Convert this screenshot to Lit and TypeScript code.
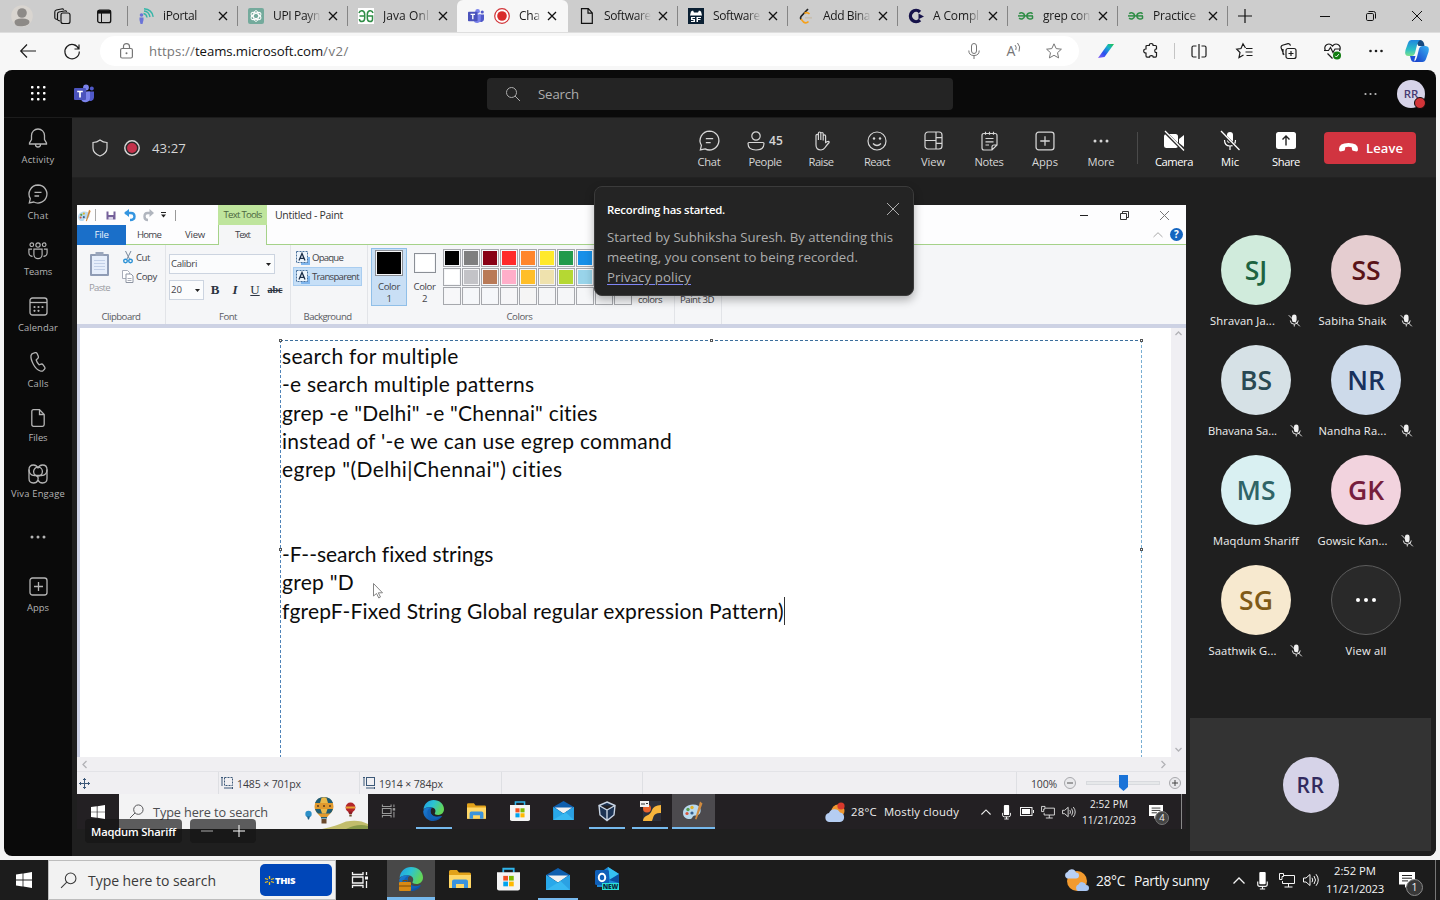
import { LitElement, html, svg, css, nothing } from "lit";
import { customElement, property } from "lit/decorators.js";
import { styleMap } from "lit/directives/style-map.js";

/* Single-line text whose tracking is adjusted to span a known advance width. */
@customElement("fit-text")
class FitText extends LitElement {
  @property({ type: Number }) w = 0;
  @property() s = "";
  static styles = css`
    :host { display: inline-block; white-space: pre; flex: none; }
  `;
  render() { return html`<span>${this.s}</span>`; }
  updated() {
    const el = this.renderRoot.querySelector("span") as HTMLElement;
    el.style.letterSpacing = "0px";
    if (!this.w) return;
    const natural = el.getBoundingClientRect().width;
    el.style.letterSpacing = (this.w - natural) / this.s.length + "px";
  }
}

const t = (s: string, w = 0, c = "") => html`<fit-text class=${c} .w=${w} .s=${s}></fit-text>`;
const ic = (w: number, h: number, body: unknown, vb = `0 0 ${w} ${h}`, c = "") =>
  html`<svg class="i ${c}" width=${w} height=${h} viewBox=${vb}>${body}</svg>`;

const base = css`
  * { box-sizing: border-box; }
  :host { display: block; font-family: "Open Sans", "Noto Sans", sans-serif; }
  .i { display: block; flex: none; fill: none; stroke: currentColor; stroke-width: 1; overflow: visible; }
  .c { display: flex; align-items: center; justify-content: center; flex: none; }
  .row { display: flex; align-items: center; }
  .grow { flex: 1; }
`;

/* ---------- shared icon bodies ---------- */
const xMark = svg`<path d="M1 1L9 9M9 1L1 9"/>`;
const teamsLogo = svg`
  <circle cx="12" cy="3" r="2.9" fill="#7b83eb" stroke="none"/><circle cx="17.8" cy="4" r="2" fill="#5059c9" stroke="none"/>
  <path d="M13.5 7H20v6a3.6 3.6 0 0 1-6 2.5z" fill="#5059c9" stroke="none"/>
  <path d="M7 7h9v6.5a4.6 4.6 0 0 1-9 1z" fill="#7b83eb" stroke="none"/>
  <rect x="0" y="3.6" width="12" height="12" rx="1" fill="#4b53bc" stroke="none"/>
  <path d="M3.2 7h5.6M6 7v6" stroke="#fff" stroke-width="1.7"/>`;
const chatBody = svg`<path d="M10 1a9 9 0 1 1-4.2 17L1.3 19l1-4.4A9 9 0 0 1 10 1zM6.500 8.300h7M6.500 12h4.600"/>`;
const appsPlus = svg`<rect x="1" y="1" width="17" height="17" rx="2.5"/><path d="M9.5 5v9M5 9.5h9"/>`;
const dots3 = svg`<g fill="currentColor" stroke="none"><circle cx="2" cy="2" r="1.5"/><circle cx="8" cy="2" r="1.5"/><circle cx="14" cy="2" r="1.5"/></g>`;
const winLogo = svg`<path fill="#fff" stroke="none" d="M0 2.4L6.6 1.5V7.6H0zM7.4 1.4L16 0V7.6H7.4zM0 8.4H6.6V14.5L0 13.6zM7.4 8.4H16V16L7.4 14.6z"/>`;
const magnify = svg`<circle cx="10" cy="6" r="5"/><path d="M6.4 9.6L1 15"/>`;
const taskView = svg`<g stroke-width="1.3"><path d="M.5 0V2.500H11V0M.5 16v-2.500H11V16M.5 5h10.500v6H.5z"/><path d="M14.500 0V3M14.500 9v7" /></g><rect x="13" y="4.500" width="3" height="3" fill="currentColor" stroke="none"/>`;
const edge = svg`<defs><linearGradient id="eg" x1="0" y1="0" x2="1" y2=".4"><stop offset="0" stop-color="#1e9de8"/><stop offset=".5" stop-color="#2cc3d2"/><stop offset="1" stop-color="#62d558"/></linearGradient><linearGradient id="eb" x1="0" y1="0" x2="1" y2="1"><stop offset="0" stop-color="#1b7fd6"/><stop offset="1" stop-color="#0c4a9c"/></linearGradient></defs>
  <g stroke="none"><path fill="url(#eg)" d="M.6 11C1 4.500 6 0 12 0c7 0 12 4.800 12 10.500 0 4-3 6.500-6.500 6.500-3 0-4.500-1.200-4-2 1.500-2 1-6-3.500-6.500C6 8 2 9 .6 11z"/>
  <path fill="url(#eb)" d="M10 8.500C5 7.500 1 9 .2 13 .5 19.500 6 24 12 24c4.500 0 8-2.200 9.800-5.300.3-.5-.2-.7-.6-.4C16 20.500 9 18.500 8.500 13.500c-.1-2.200.5-4 2.500-5z"/>
  <path fill="#1162b8" d="M8.600 13c.3 5 5.900 7.700 12.700 5.300C16 23.500 8 22.500 5.500 17 4 13 6 9.500 10 8.700 9 10 8.500 11 8.600 13z"/></g>`;
const folder = svg`<g stroke="none"><path fill="#e2a21a" d="M0 1.500A1.500 1.500 0 0 1 1.500 0H8l2 2.500h10.500A1.500 1.500 0 0 1 22 4v14H0z"/><path fill="#ffd767" d="M0 5h22v12a1 1 0 0 1-1 1H1a1 1 0 0 1-1-1z"/><path fill="#3b93dd" d="M3 18v-6.500A2 2 0 0 1 5 9.500h12a2 2 0 0 1 2 2V18h-4v-4H7v4z"/></g>`;
const store = svg`<path d="M6 5V1.200h10V5" stroke="#2fb4ea" stroke-width="1.700"/><path fill="#f4f4f4" stroke="none" d="M0 4.500h22V20a2 2 0 0 1-2 2H2a2 2 0 0 1-2-2z"/><g stroke="none"><rect x="6" y="8" width="4.500" height="4.500" fill="#f25022"/><rect x="11.500" y="8" width="4.500" height="4.500" fill="#7fba00"/><rect x="6" y="13.500" width="4.500" height="4.500" fill="#00a4ef"/><rect x="11.500" y="13.500" width="4.500" height="4.500" fill="#ffb900"/></g>`;
const mail = svg`<g stroke="none"><path fill="#0f5fae" d="M0 7L12 0l12 7v5H0z"/><path fill="#f2f2f2" d="M2 7.500h20L13 14h-2z"/><path fill="#28a8ea" d="M0 7l12 7.500L24 7v15H0z"/><path fill="#46c5f5" d="M24 22H0L24 7z" opacity=".55"/><path fill="#1e8ad6" d="M14.500 13L24 22V7z" opacity=".5"/></g>`;
const chevUp = svg`<path d="M.5 6.500L6 1l5.500 5.500" stroke-width="1.300"/>`;
const taskMic = svg`<rect x="2" y="0" width="6" height="11.500" rx="1" fill="#fff" stroke="none"/><path d="M.5 9v2.500q0 2 2 2h5q2 0 2-2V9M5 13.500V16M2.500 16h5" stroke-width="1.100"/>`;
const network = svg`<path d="M5 2.500h10.500v8H3.500V8M9.500 10.500V14M5.500 14h8"/><path d="M.5.500h4v3h-1.500v3H.5z"/>`;
const speaker = svg`<path d="M.5 5h2.500L7 1.500v11L3 9H.5zM9 4.800q1.500 2.200 0 4.400M11 3q3 4 0 8M13 1.200q4.500 5.800 0 11.600"/>`;
const noteIcon = svg`<path fill="#fff" stroke="none" d="M0 0h16v12.500H9L6 16v-3.500H0z"/><path d="M3 3.500h10M3 6.200h10M3 8.900h6" stroke="#222"/>`;
const micOff = svg`<g stroke="none" fill="currentColor"><rect x="4.300" y="0" width="5" height="8.500" rx="2.500"/></g><path d="M2.500 6.500q0 4 4.300 4t4.300-4M6.800 10.500V13M.8.800l12 12" />`;

/* ---------- browser ---------- */
const g4g = svg`<g stroke="#2f8d46" stroke-width="1.500" transform="translate(-.5 2.600)"><path d="M1.800 3.200C3 1.600 7 1.800 7 5.200S3.500 9 1.500 7.600M15 3.200C14 1.600 9.400 1.800 9.400 5.200S13.500 9.200 15 7.600V5.300"/><path d="M.5 5.300h15"/></g>`;
const favs = {
  portal: svg`<g stroke="none" fill="#6b74d8"><circle cx="3.500" cy="7" r="1.800"/><path d="M1.500 9.500h4v2.500l-1 4h-2l-1-4z"/></g><g stroke="#35b6a8" stroke-width="1.400"><path d="M5.500 5.500q3 .5 3.500 4M6 3q5 .5 6 6M6 .8q8 .7 9.200 8"/></g>`,
  gpt: svg`<rect width="16" height="16" rx="2" fill="#74aa9c" stroke="none"/><g stroke="#fff" stroke-width=".9"><ellipse cx="8" cy="8" rx="2.600" ry="5.400"/><ellipse cx="8" cy="8" rx="2.600" ry="5.400" transform="rotate(60 8 8)"/><ellipse cx="8" cy="8" rx="2.600" ry="5.400" transform="rotate(120 8 8)"/></g>`,
  gfg: svg`<rect width="16" height="16" fill="#fff" stroke="none"/><g stroke="#2f8d46" stroke-width="1.500"><path d="M1 5C2 1.500 6.700 2 6.700 6.500V10q0 3.500-2.700 3.500T1.500 11M7 8H1.500M15 5C14 1.500 9.300 2 9.300 6.500V10q0 3.500 2.700 3.500T14.500 11V8H9.300"/></g>`,
  page: svg`<path stroke-width="1.200" d="M2.500.7h6.800l4 4.200v10.400h-10.800zM9 .8v4.400h4.300"/>`,
  sf: svg`<rect width="16" height="16" fill="#0b2033" stroke="none"/><path fill="#fff" stroke="none" d="M3 3.500l2-1 1 2h4l1-2 2 1 1 4H2zM3 9h4v1H4.500v1H7v3H3v-1h2.500v-1H3zM8.500 9H13v1h-3v1h2.500v1H10v2H8.500z"/>`,
  leet: svg`<g stroke-width="1.700"><path d="M10 1L3 8.500Q2 10 3 11.500" stroke="#222"/><path d="M11.500 6Q9 3.500 6.500 5.500M3 11l2.500 3Q8 16 10.500 13.500" stroke="#f5a11c"/><path d="M7 9.800h7" stroke="#c9c0b0"/></g>`,
  chegg: svg`<path d="M12 4A5.600 5.600 0 1 0 12 12" stroke="#16124a" stroke-width="3.400"/><path d="M10.500 5.500L16 8.500l-5.500 2.800z" fill="#16124a" stroke="none"/>`,
};

@customElement("browser-chrome")
class BrowserChrome extends LitElement {
  static styles = [base, css`
    .tabs { height: 32px; background: #cdcdcd; display: flex; color: #111; font-size: 12px; }
    .lead { width: 38px; height: 32px; }
    .lead.f { width: 43px; }
    .lead.l { width: 46px; }
    .tab { width: 110px; height: 32px; display: flex; align-items: center; position: relative; flex: none; }
    .tab::before { content: ""; width: 1px; height: 20px; background: #858585; }
    .tab.nosep::before { background: transparent; }
    .tab.active { background: #f7f7f7; border-radius: 6px 6px 0 0; width: 111px; }
    .tab.after { width: 109px; }
    .fav { width: 16px; margin-left: 10px; }
    .label { width: 48px; margin-left: 9px; color: #1a1a1a; line-height: 18px;
      -webkit-mask-image: linear-gradient(90deg, #000 70%, transparent); }
    .tab.active .label { width: 22px; margin-left: 9px; }
    .x { margin-left: 7px; width: 10px; }
    .tab.active .x { margin-left: 6px; }
    .tab.after .label { width: 47px; }
    .x svg { stroke-width: 1.300; }
    .win { width: 46px; height: 32px; }
    .bar { height: 38px; background: #f7f7f7; display: flex; align-items: center; color: #1c1c1c; box-shadow: inset 0 1px #dedede; }
    .nav { width: 44px; }
    .pill { width: 979px; height: 30px; border-radius: 15px; background: #fff; display: flex; align-items: center; color: #767676; font-size: 13.200px; margin-left: 6px; padding: 0 6px 0 20px; }
    .pill .u { color: #111; }
    .pill .lock { margin-right: 16px; }
    .w40 { width: 40px; } .w44 { width: 44.100px; }
    .gap5 { width: 3px; }
    .vs { width: 1px; height: 16px; background: #c4c4c4; }
    .read { font-size: 14px; line-height: 16px; }
  `];
  tab(icon: unknown, label: string, w: number, cls = "", rec = false) {
    return html`<div class="tab ${cls}">
      <div class="fav">${ic(16, 16, icon, cls.includes("active") ? "0 0 20 18" : "0 0 16 16")}</div>
      ${rec ? html`<div class="fav">${ic(16, 16, svg`<circle cx="8" cy="8" r="7.300" stroke="#d13438" stroke-width="1.200" fill="#fff"/><circle cx="8" cy="8" r="4.800" fill="#d92c2c" stroke="none"/>`)}</div>` : nothing}
      <div class="label">${t(label, w)}</div>
      <div class="x">${ic(10, 10, xMark)}</div>
    </div>`;
  }
  render() {
    return html`
      <div class="tabs">
        <div class="c lead f">${ic(22, 22, svg`<g stroke="none"><circle cx="11" cy="11" r="10.800" fill="#d9d5d0"/><circle cx="11" cy="8" r="4.800" fill="#8d8a87"/><path d="M3.500 17q0-3.500 7.500-3.500t7.500 3.500-7.500 4.200T3.500 17z" fill="#8d8a87"/></g>`)}</div>
        <div class="c lead">${ic(17, 17, svg`<g stroke-width="1.150"><rect x="7" y="5" width="9" height="10.500" rx="2"/><path d="M6 13l-1.600-.5q-.9-.3-.9-1.500V6q0-1.700 1.500-2l6.500-1.200 1.500.7M3.500 11.500l-1.800-.5Q.8 10.700.8 9.500V4q0-1.600 1.500-2L8.500.8l1.500.7"/></g>`)}</div>
        <div class="c lead l">${ic(15, 15, svg`<rect x=".7" y="1.200" width="13" height="12.500" rx="2" stroke-width="1.300"/><path d="M.7 3h13" stroke-width="3.200"/><path d="M4.500 4v9.500"/>`)}</div>
        ${this.tab(favs.portal, "iPortal", 34)}
        ${this.tab(favs.gpt, "UPI Payn", 47)}
        ${this.tab(favs.gfg, "Java Onl", 46)}
        ${this.tab(teamsLogo, "Cha", 21, "nosep active", true)}
        ${this.tab(favs.page, "Software", 47, "nosep after")}
        ${this.tab(favs.sf, "Software", 47)}
        ${this.tab(favs.leet, "Add Bina", 47)}
        ${this.tab(favs.chegg, "A Compl", 46)}
        ${this.tab(g4g, "grep con", 47)}
        ${this.tab(g4g, "Practice", 43)}
        <div class="tab" style="width:36px"><div class="c" style="width:34px">${ic(14, 14, svg`<path d="M7 0v14M0 7h14" stroke-width="1.200"/>`)}</div></div>
        <div class="grow"></div>
        <div class="c win">${ic(10, 10, svg`<path d="M0 5.500h10"/>`)}</div>
        <div class="c win">${ic(10, 10, svg`<rect x=".5" y="2.500" width="7" height="7" rx="1.200"/><path d="M2.500.5H7.500Q9.500.5 9.500 2.500V7.500"/>`)}</div>
        <div class="c win">${ic(10, 10, svg`<path d="M0 0l10 10M10 0L0 10"/>`)}</div>
      </div>
      <div class="bar">
        <div class="c nav" style="width:56px">${ic(16, 14, svg`<path d="M7 .5L.7 7L7 13.500M.7 7H16" stroke-width="1.200"/>`)}</div>
        <div class="c nav" style="width:32px">${ic(16, 16, svg`<path d="M14.800 6A7.200 7.200 0 1 0 15.300 8.500M15 1.500V6H10.500" stroke-width="1.200"/>`)}</div>
        <div class="gap5"></div><div class="gap5"></div>
        <div class="pill">
          <div class="lock">${ic(13, 16, svg`<rect x=".6" y="5.500" width="11.800" height="9.500" rx="1.500" stroke-width="1.200"/><path d="M3.500 5.500V3.500q0-2.900 3-2.900t3 2.900V5.500" stroke-width="1.200"/><circle cx="6.500" cy="10.200" r="1" fill="currentColor" stroke="none"/>`)}</div>
          ${t("https://", 46)}${t("teams.microsoft.com", 128, "u")}${t("/v2/", 26)}
          <div class="grow"></div>
          <div class="c w40">${ic(12, 16, svg`<rect x="3.500" y=".5" width="5" height="10" rx="2.500"/><path d="M.8 7.500q0 5 5.200 5t5.200-5M6 12.500V16"/>`)}</div>
          <div class="c w40"><span class="read">A</span>${ic(6, 12, svg`<path d="M0 2q2 2 .8 5M2.500 0q3.500 3.500 1.500 8.500"/>`, "0 2 6 12")}</div>
          <div class="c w40" style="width:39px">${ic(16, 16, svg`<path d="M8 .8l2.200 4.800 5.200.6-3.900 3.500 1.100 5.200L8 12.300l-4.600 2.600 1.100-5.200L.6 6.200l5.200-.6z"/>`)}</div>
        </div>
        <div class="gap5"></div><div class="gap5" style="width:2px"></div>
        <div class="c w44">${ic(16, 14, svg`<defs><linearGradient id="pg" x1="1" y1="0" x2="0" y2="1"><stop offset="0" stop-color="#1fc24a"/><stop offset=".3" stop-color="#18b4c8"/><stop offset=".65" stop-color="#2a50f0"/><stop offset="1" stop-color="#8a5cf6"/></linearGradient></defs><path fill="url(#pg)" stroke="none" d="M10 0h6L6.500 13 0 14z"/>`)}</div>
        <div class="c w44" style="width:46px">${ic(16, 16, svg`<path stroke-width="1.200" d="M3 3.500q0-1 1-1h2.300q0-2 1.900-2t1.900 2h2.400q1 0 1 1v2.300q-1.800 0-1.800 1.900t1.800 1.900v3.200q0 1.400-1 1.400h-2.200q0-1.600-1.900-1.600t-1.900 1.600H4q-1 0-1-1.400V10Q.7 10 .7 8T3 6z"/>`)}</div>
        <div class="vs"></div>
        <div class="c w44" style="width:47px">${ic(16, 15, svg`<path stroke-width="1.200" d="M5.500 2H2.500Q1 2 1 3.500v8Q1 13 2.500 13h3M10.500 2h3q1.500 0 1.500 1.500v8q0 1.500-1.500 1.500h-3M8 0v15"/>`)}</div>
        <div class="c w44">${ic(17, 16, svg`<path stroke-width="1.200" d="M9.500 5L7 .8 5 5.500.7 6.200 4 9.500l-1 5L7.500 12M10 5.500h6.500M9.500 9h7M10.500 12.500h6"/>`)}</div>
        <div class="c w44">${ic(17, 16, svg`<rect x="6" y="5.500" width="10" height="10" rx="2" stroke-width="1.200"/><path stroke-width="1.200" d="M11 8v5M8.500 10.500h5M4 12L1.200 5Q.6 3 2.500 2.200L8 .7q2-.3 2.500 2M3 11.500V6"/>`)}</div>
        <div class="c w44">${ic(17, 17, svg`<path stroke-width="1.200" d="M1.500 8Q-.5 3.500 3 1.500 6 0 8.500 3 11 0 14 1.500 17.500 3.500 15.500 8M3.500 10.500L8.500 15.500M0 7.500h4.500l2-3 2.500 5 2-3.500h5"/><circle cx="13" cy="12.500" r="4" fill="#107c10" stroke="none"/><path d="M11.200 12.800l1.200 1.200 2.400-2.800" stroke="#fff"/>`)}</div>
        <div class="c w44" style="width:43px">${ic(14, 4, svg`<g fill="currentColor" stroke="none"><circle cx="1.500" cy="2" r="1.300"/><circle cx="7" cy="2" r="1.300"/><circle cx="12.500" cy="2" r="1.300"/></g>`)}</div>
        <div class="c w44" style="width:40px">${ic(24, 24, svg`<defs><linearGradient id="ca" x1="0" y1="0" x2="0" y2="1"><stop offset="0" stop-color="#1f86e0"/><stop offset=".6" stop-color="#2bbfc6"/><stop offset="1" stop-color="#7fe08a"/></linearGradient><linearGradient id="cb" x1="0" y1="1" x2="1" y2="0"><stop offset="0" stop-color="#1638c8"/><stop offset="1" stop-color="#37b4f3"/></linearGradient></defs><g stroke="none"><path fill="#164a80" d="M10 1h5q3 0 4 3.500L19.500 7h-6z"/><path fill="url(#ca)" d="M6.500 1H15q-2 1-3 5l-2 8q-.8 3-3.500 3H3.500Q-1 17 .5 11L3 4Q4 1 6.500 1z"/><path fill="url(#cb)" d="M17.500 23H9q2-1 3-5l2-8q.8-3 3.500-3h3q4.500 0 3 6L21 20q-1 3-3.500 3z"/><path fill="#1d50d8" d="M5 17h5.500l-1 3.500Q9 23 11 23H9q-2.500 0-3.200-3z"/></g>`)}</div>
      </div>`;
  }
}

/* ---------- paint window inside the shared screen ---------- */
const palette = [
  ["#000", "#7f7f7f", "#880015", "#ff2a2a", "#ff862b", "#ffe92b", "#219a4b", "#1790e8", "#3f48cc", "#a349a4"],
  ["#fff", "#c3c3c7", "#b97a57", "#ffaec9", "#ffbe29", "#efe2ae", "#b5d833", "#99d4ea", "#7092be", "#c8bfe7"],
  ["#f7f7f9", "#f5f7fa", "#f5f7fa", "#f6f6f8", "#f5f5f5", "#f5f6f8", "#f5f6f8", "#f5f6f8", "#f5f6f8", "#f5f6f8"],
];
const lines: [string, number][] = [
  ["search for multiple", 177], ["-e search multiple patterns", 252], ["grep -e \"Delhi\" -e \"Chennai\" cities", 316],
  ["instead of '-e we can use egrep command", 390], ["egrep \"(Delhi|Chennai\") cities", 281], ["", 0], ["", 0],
  ["-F--search fixed strings", 211], ["grep \"D", 72], ["fgrepF-Fixed String Global regular expression Pattern)", 501],
];
const paintLogo = svg`<g stroke="none"><path fill="#b9d9ee" d="M10 3C4 3 0 7 0 11.500S4 18 7.500 17.500c2-.3 1.500-2 3-3s4 0 6-2S19 3 10 3z"/><circle cx="5" cy="8" r="1.700" fill="#5a9e4b"/><circle cx="9" cy="6" r="1.700" fill="#e1b32c"/><circle cx="4" cy="12" r="1.600" fill="#d8553c"/><circle cx="9" cy="11.500" r="1.600" fill="#385f8c"/><path fill="#d08a3e" d="M17 0l2.500 2-6 16-1.500-.5z"/></g>`;

@customElement("paint-window")
class PaintWindow extends LitElement {
  static styles = [base, css`
    :host { color: #434349; font-size: 9.600px; }
    .title { height: 20px; background: #fdfdfe; display: flex; align-items: center; }
    .qa { width: 141px; padding-left: 1px; display: flex; align-items: center; }
    .tt { width: 49px; height: 20px; background: #bfe59d; color: #4c6640; text-align: center; line-height: 20px; }
    .name { margin-left: 8px; color: #333; font-size: 10.500px; }
    .wb { width: 40.500px; color: #333; }
    .tabs { height: 20px; display: flex; background: #fdfdfe; border-bottom: 1px solid #a5d289; line-height: 19px; text-align: center; }
    .file { width: 49px; height: 20px; background: #1a6fc9; color: #e8f2fc; }
    .tb { width: 46px; } .tb.on { width: 49px; height: 20px; background: #f5f6f7; border: solid #a5d289; border-width: 0 1px; }
    .help { width: 13px; height: 13px; border-radius: 50%; background: #1465c0; color: #fff; font-weight: 700; line-height: 13px; font-size: 10px; margin: 3px 3px 0 7px; }
    .ribbon { height: 79px; background: #f5f6f8; display: flex; }
    .g { border-right: 1px solid #e2e4e8; display: flex; flex-direction: column; height: 79px; padding-top: 3px; }
    .g .body { flex: 1; display: flex; }
    .g .cap { height: 15px; line-height: 16px; text-align: center; color: #5a5b62; }
    .paste { width: 43px; padding: 4px 0 0 12px; color: #9a9ba2; display: flex; flex-direction: column; gap: 4px; }
    .cc { display: flex; flex-direction: column; padding: 0 0 0 2px; }
    .cc > div { height: 19px; display: flex; align-items: center; gap: 2px; }
    .sel { border: 1px solid #ccd4e0; background: #fbfcfd; height: 20px; display: flex; align-items: center; justify-content: space-between; padding: 0 3px 2px 1px; }
    .fnt { padding: 6px 0 0 3px; display: flex; flex-direction: column; gap: 6px; }
    .fr { display: flex; }
    .b { width: 20px; text-align: center; font: bold 13px/19px "Liberation Serif", serif; color: #2b3340; }
    .opq { height: 19px; display: flex; align-items: center; gap: 2px; padding-left: 3px; width: 69px; margin-left: 2px; }
    .opq.on { background: #c6dff7; border: 1px solid #a9cdf0; padding-left: 2px; }
    .col { width: 36px; height: 58px; display: flex; flex-direction: column; align-items: center; line-height: 12px; border: 1px solid transparent; flex: none; }
    .col.on { background: #c9dff5; border-color: #90bfe8; }
    .sw { border: 1px solid #8b8f96; padding: 1px; background: #f5f6f8; }
    .sw div { width: 100%; height: 100%; }
    .one { width: 28px; height: 28px; margin: 1px 0 5px; } .two { width: 22px; height: 22px; margin: 4px 0 8px; }
    .pal { display: grid; grid-template-columns: repeat(10, 18px); grid-auto-rows: 18px; gap: 1px; padding-top: 1px; }
    .pal .p { border: 1px solid #a6a8ad; padding: 1px; }
    .pal .p div { height: 100%; }
    .low { padding-top: 45px; }
    .canvasrow { height: 433px; background: #fff; border-top: 4px solid #cdd2e4; border-left: 3px solid #cdd2e6; display: flex; overflow: hidden; }
    .page { width: 1091px; padding: 12px 0 0 200px; height: 429px; position: relative; }
    .box { width: 862px; height: 417px; padding: 2px 0 0 2px; position: relative; color: #0c0c0c; font: 21px/28.300px "Lato", sans-serif;
      background: repeating-linear-gradient(90deg, #3c6f9c 0 3px, #fff 3px 5px) 0 0 / 100% 1px no-repeat,
        repeating-linear-gradient(#4f83b8 0 3px, #fff 3px 5px) 0 0 / 1px 100% no-repeat,
        repeating-linear-gradient(#78aed2 0 3px, #fff 3px 5px) 100% 0 / 1px 100% no-repeat; }
    .ln { height: 28.300px; display: flex; }
    .caret { width: 1px; height: 28px; background: #333; }
    .h { position: absolute; width: 3px; height: 3px; border: 1px solid #555; background: #fff; }
    .cur { position: absolute; left: 293px; top: 255px; }
    .vsb { width: 15px; background: #f0eff3; display: flex; flex-direction: column; justify-content: space-between; align-items: center; padding: 3px 0 5px; color: #b2b2b6; }
    .hsb { height: 15px; background: #f0eff2; display: flex; justify-content: space-between; align-items: center; padding: 0 20px 0 5px; color: #b2b2b6; border-bottom: 1px solid #e3e3e7; }
    .st { height: 22px; background: #f0eff2; display: flex; font-size: 10.500px; color: #3c3c42; }
    .st > div { display: flex; align-items: center; border-right: 1px solid #dedfe3; gap: 4px; }
    .st > div:last-child { border: 0; }
    .st fit-text { padding-top: 1px; }
    .rb { width: 12px; height: 12px; border-radius: 50%; border: 1px solid #a8a8ac; background: #e9e9ec; flex: none; }
    .sl { width: 74px; height: 4px; border: 1px solid #d8dade; background: #e6e8ea; position: relative; }
    .thumb { position: absolute; left: 32px; top: -7px; }
  `];
  render() {
    const hs = [[-1, -1], [430, -1], [860, -1], [-1, 208], [860, 208]];
    const aBox = ic(14, 14, svg`<rect x="5" y="6" width="9" height="8" fill="#7fb6ee" stroke="none"/><rect x=".5" y=".5" width="11" height="11" stroke="#49719c" stroke-dasharray="2 1" fill="#eef5fc"/><path d="M3 9.500L6 2.500 9 9.500M4 7.300h4" stroke="#1c2e48" stroke-width="1.300"/>`);
    const caretDown = ic(5, 3, svg`<path fill="#222" stroke="none" d="M0 1h5L2.500 4z"/>`);
    return html`
      <div class="title">
        <div class="qa">
          ${ic(13, 13, paintLogo, "0 0 20 18")}
          <span style="width:4px"></span>${ic(1, 12, svg`<path d="M.5 0v12" stroke="#aaa"/>`)}
          <span style="width:10px"></span>${ic(10, 9, svg`<rect x=".5" y=".5" width="9" height="8" fill="#75609a" stroke="none"/><rect x="2.500" y="0" width="5" height="4" fill="#fff" stroke="none"/><rect x="2.500" y="6" width="4.500" height="3" fill="#d8d2e6" stroke="none"/>`)}
          <span style="width:8px"></span>${ic(12, 12, svg`<path d="M1 4h6q3.500 0 3.500 3.500T6 11" stroke="#3495e0" stroke-width="2.400"/><path fill="#3495e0" stroke="none" d="M0 4L5 0v8z"/>`)}
          <span style="width:7px"></span>${ic(11, 12, svg`<path d="M9 4H4.500Q1.500 4 1.500 7.500T5 11" stroke="#b0b5be" stroke-width="2.400"/><path fill="#b0b5be" stroke="none" d="M11 4L6.500 0v8z"/>`)}
          <span style="width:7px"></span>${ic(5, 6, svg`<path d="M0 .5h5" stroke="#222"/><path fill="#222" stroke="none" d="M0 2.500h5L2.500 5.500z"/>`)}
          <span style="width:9px"></span>${ic(1, 11, svg`<path d="M.5 0v11" stroke="#999"/>`)}
        </div>
        <div class="tt">${t("Text Tools", 38)}</div>
        <div class="name">${t("Untitled - Paint", 68)}</div>
        <div class="grow"></div>
        <div class="c wb">${ic(8, 1, svg`<path d="M0 .5h8" stroke="#222"/>`)}</div>
        <div class="c wb">${ic(9, 9, svg`<path d="M.5 2.500h6v6h-6zM2.500 2.500v-2h6v6h-2"/>`)}</div>
        <div class="c wb" style="margin-right:1px">${ic(9, 9, svg`<path d="M0 0l9 9M9 0L0 9" stroke="#777"/>`)}</div>
      </div>
      <div class="tabs">
        <div class="file">${t("File", 14)}</div><div class="tb">${t("Home", 24)}</div><div class="tb">${t("View", 20)}</div>
        <div class="tb on">${t("Text", 15)}</div><div class="grow"></div>
        <div class="c">${ic(10, 5, svg`<path d="M.5 5L5 .7 9.500 5" stroke="#aaa"/>`)}</div><div class="help">?</div>
      </div>
      <div class="ribbon">
        <div class="g" style="width:89px"><div class="body">
          <div class="paste">${ic(21, 25, svg`<rect x="1" y="2" width="19" height="22" rx="1" fill="#8f9cb5" stroke="none"/><rect x="3" y="4" width="15" height="18" fill="#e6eefb" stroke="none"/><rect x="6.500" y="0" width="8" height="4" fill="#9aa6bc" stroke="none"/><path d="M5 8.500h11M5 11.500h11M5 14.500h11M5 17.500h11" stroke="#c2d0e8"/>`)}${t("Paste", 21)}</div>
          <div class="cc"><div>${ic(12, 13, svg`<path d="M3.500 0l4 8M9 0L5 8" stroke="#75869a"/><circle cx="3.500" cy="10" r="1.800" stroke="#2e93d6" stroke-width="1.400"/><circle cx="8.500" cy="10" r="1.800" stroke="#2e93d6" stroke-width="1.400"/>`)}${t("Cut", 14)}</div>
          <div>${ic(12, 13, svg`<path d="M.5.5h5l2 2v6h-7z" fill="#fff" stroke="#a8adb8"/><path d="M4 4h5l2 2v6.500H4z" fill="#fff" stroke="#8d94a2"/><path d="M5.500 8.500h4M5.500 10.500h4" stroke="#a8adb8"/>`)}${t("Copy", 21)}</div></div>
        </div><div class="cap">${t("Clipboard", 39)}</div></div>
        <div class="g" style="width:125px"><div class="body fnt">
          <div class="sel" style="width:106px">${t("Calibri", 26)}${caretDown}</div>
          <div class="fr"><div class="sel" style="width:35px">${t("20", 11)}${caretDown}</div>
            <div class="b" style="margin-left:1px">B</div><div class="b"><i>I</i></div><div class="b" style="text-decoration:underline;font-weight:400">U</div><div class="b" style="text-decoration:line-through;font-size:10px">abc</div></div>
        </div><div class="cap">${t("Font", 18)}</div></div>
        <div class="g" style="width:77px"><div class="body" style="flex-direction:column">
          <div class="opq">${aBox}${t("Opaque", 31)}</div><div class="opq on">${aBox}${t("Transparent", 47)}</div>
        </div><div class="cap" style="padding-right:3px">${t("Background", 48)}</div></div>
        <div class="g" style="width:307px"><div class="body" style="padding-left:3px">
          <div class="col on"><div class="sw one"><div style="background:#000"></div></div>${t("Color", 22)}${t("1", 5)}</div>
          <div class="col" style="width:35px;margin-right:1px"><div class="sw two"><div style="background:#fff"></div></div>${t("Color", 22)}${t("2", 5)}</div>
          <div class="pal">${palette.flat().map((c) => html`<div class="p"><div style=${styleMap({ background: c })}></div></div>`)}</div>
          <div class="low" style="margin-left:6px">${t("colors", 24)}</div>
        </div><div class="cap" style="padding-right:3px">${t("Colors", 26)}</div></div>
        <div class="g" style="width:47px"><div class="body"><div class="low" style="margin-left:5px">${t("Paint 3D", 34)}</div></div></div>
      </div>
      <div class="canvasrow">
        <div class="page">
          <div class="box">
            ${lines.map(([s, w], i) => html`<div class="ln">${s ? t(s, w) : nothing}${i === 9 ? html`<div class="caret"></div>` : nothing}</div>`)}
            ${hs.map(([x, y]) => html`<div class="h" style=${styleMap({ left: x + "px", top: y + "px" })}></div>`)}
          </div>
          <div class="cur">${ic(10, 16, svg`<path fill="#fff" stroke="#777" stroke-width=".9" d="M.5.5V13l3-2.500 2.300 4.500 1.700-1-2.200-4.200H9.500z"/>`)}</div>
        </div>
        <div class="vsb">${ic(7, 4, svg`<path d="M.5 4l3-3 3 3" stroke-width="1.300"/>`)}${ic(7, 4, svg`<path d="M.5 0l3 3 3-3" stroke-width="1.300"/>`)}</div>
      </div>
      <div class="hsb">${ic(5, 7, svg`<path d="M4.500 0L1 3.500l3.500 3.500" stroke-width="1.300"/>`)}${ic(5, 7, svg`<path d="M.5 0L4 3.500.5 7" stroke-width="1.300"/>`)}</div>
      <div class="st">
        <div style="width:142px;padding-left:2px">${ic(11, 11, svg`<path d="M0 5.500h11M5.500 0v11M2 4L.5 5.500 2 7M9 4l1.500 1.500L9 7M4 2L5.500.5 7 2M4 9l1.500 1.500L7 9" stroke="#3c5878"/>`)}</div>
        <div style="width:141px;padding-left:2px">${ic(12, 12, svg`<path d="M1 0v9M0 1l1-1 1 1M3 11h9M11 10l1 1-1 1" stroke="#3c5878"/><rect x="3.500" y=".5" width="8" height="8" stroke="#3c5878" stroke-dasharray="2 1"/>`)}${t("1485 × 701px", 64)}</div>
        <div style="width:142px;padding-left:3px">${ic(12, 12, svg`<path d="M1 0v9M0 1l1-1 1 1M3 11h9M11 10l1 1-1 1" stroke="#3c5878"/><rect x="3.500" y=".5" width="8" height="8" stroke="#3c5878"/>`)}${t("1914 × 784px", 64)}</div>
        <div style="width:141px"></div><div style="width:374px"></div>
        <div style="flex:1;gap:0;padding-left:14px">${t("100%", 26)}<div class="c rb" style="margin:0 10px 0 7px">${ic(6, 6, svg`<path d="M0 3h6" stroke="#555"/>`)}</div>
          <div class="sl"><div class="thumb">${ic(9, 16, svg`<path fill="#1a73d8" stroke="none" d="M0 0h9v12l-4.500 4L0 12z"/>`)}</div></div>
          <div class="c rb" style="margin-left:9px">${ic(6, 6, svg`<path d="M0 3h6M3 0v6" stroke="#444"/>`)}</div></div>
      </div>`;
  }
}

/* ---------- taskbar in the shared screen ---------- */
@customElement("shared-taskbar")
class SharedTaskbar extends LitElement {
  static styles = [base, css`
    :host { height: 35px; display: flex; background: #232023; color: #eee; font-size: 11.300px; }
    .c { height: 35px; }
    .search { width: 249px; background: #f3f3f4; color: #4d4d50; display: flex; align-items: center; font-size: 12.700px; padding-left: 10px; }
    .app { width: 43.300px; border-bottom: 2px solid transparent; }
    .un { background: linear-gradient(#76b9ed, #76b9ed) 50% 100% / 36px 2px no-repeat; background-origin: border-box; background-clip: border-box; }
    .on { background: #4c4a4e; border-bottom-color: #76b9ed; }
    .clock { text-align: center; font-size: 10px; line-height: 16px; padding-top: 2px; }
    .badge { position: absolute; left: 6px; top: 17px; width: 14px; height: 14px; border-radius: 50%; background: #444; border: 1px solid #777; font-size: 9.500px; line-height: 12px; text-align: center; }
    .n { position: relative; }
  `];
  render() {
    return html`
      <div class="c" style="width:42px">${ic(14, 14, winLogo, "0 0 16 16")}</div>
      <div class="search">${ic(15, 15, magnify, "0 0 16 16")}<span style="width:9px"></span>${t("Type here to search", 115)}
        <div class="grow"></div>
        ${ic(64, 33, svg`<g stroke="none"><path fill="#c2bd6c" d="M18 34Q32 31 42 26.500 55 24 64 29v5z"/><path fill="#8a9a4a" d="M42 34q12-6 22-3v3z"/>
          <circle cx="4.500" cy="19" r="3.200" fill="#2c8fc7"/><path d="M3 21.500h3l-1 3H4z" fill="#1d5f88"/>
          <path fill="#e09a2e" d="M20 2a9.500 9.500 0 0 1 9.500 9.500c0 5-4.500 8-6.500 11h-6c-2-3-6.500-6-6.500-11A9.500 9.500 0 0 1 20 2z"/>
          <path fill="#1f5c74" d="M20 2q7 0 9 6H11q2-6 9-6zM11 14h18q-1 3-3 4.500H14q-2-1.500-3-4.500z"/>
          <path fill="#e9b84a" d="M17.500 3q2.500-1.500 5 0L24 8h-8zM16.500 14h7L22 18.500h-4z"/>
          <g fill="#5a3a1c"><circle cx="14" cy="11" r="1"/><circle cx="20" cy="11" r="1"/><circle cx="26" cy="11" r="1"/></g>
          <rect x="17.500" y="24" width="5" height="4.500" fill="#6b4a2c"/><path fill="#1f5c74" d="M17 22h6v1.500h-6z"/>
          <circle cx="46.500" cy="12.500" r="4.900" fill="#b3262b"/><path fill="#e8a030" d="M42 11.500h9v2h-9z"/><path fill="#8f1d22" d="M44 16.500h5l-1.200 2.500h-2.600z"/><rect x="45.300" y="19.500" width="2.400" height="2" fill="#6b4a2c"/></g>`)}
      </div>
      <div class="c app" style="color:#999;width:42px">${ic(14, 14, taskView, "0 0 17 16")}</div>
      <div class="c app un" style="margin-left:2px">${ic(21, 21, edge, "0 0 24 24")}</div>
      <div class="c app">${ic(19, 16, folder, "0 0 22 18")}</div>
      <div class="c app">${ic(20, 20, store, "0 0 22 22")}</div>
      <div class="c app">${ic(21, 19, mail, "0 0 24 22")}</div>
      <div class="c app un">${ic(18, 20, svg`<path fill="#1c3354" stroke="#c8d4e4" stroke-width="1.400" d="M9 1l8 3.500L16 14l-7 5.500L2 14 1 4.500zM1 4.500L9 9l8-4.500M9 9v10.500"/>`)}</div>
      <div class="c app un">${ic(21, 20, svg`<g stroke="none"><rect x="3" y="0" width="18" height="20" fill="#2c2f3a"/><path fill="#f7b53c" d="M21 4v8q-6-.5-7.500 3.500L12 20H3q0-4 4-5.500 3.500-1.200 5-5.500T21 4z"/><circle cx="7" cy="7.500" r="4" fill="#e8622c"/><rect x="0" y="0" width="9" height="6" fill="#f1f1f1"/></g><path d="M2 2v2M4 2v2M6 2.500h2" stroke="#333"/>`)}</div>
      <div class="c app on">${ic(20, 19, paintLogo, "0 0 20 18")}</div>
      <div class="grow"></div>
      <div class="c" style="width:22px">${ic(22, 20, svg`<g stroke="none"><circle cx="14" cy="9" r="6.500" fill="#f0962e"/><circle cx="17" cy="4" r="3.600" fill="#d8392c"/><path fill="#b5cdf2" d="M5 20a4.600 4.600 0 0 1 0-9 6 6 0 0 1 11-.5 4.800 4.800 0 0 1 0 9.500z"/></g>`)}</div>
      <div class="c" style="margin-left:5px">${t("28°C", 26)}</div><div class="c" style="margin:0 21px 0 7px">${t("Mostly cloudy", 75)}</div>
      <div class="c" style="width:12px">${ic(10, 6, chevUp, "0 0 12 7")}</div>
      <div class="c" style="width:28px">${ic(9, 14, taskMic, "0 0 10 16")}</div>
      <div class="c" style="width:14px">${ic(14, 9, svg`<rect x=".5" y=".5" width="11.500" height="8"/><rect x="2" y="2" width="8" height="5" fill="#fff" stroke="none"/><path d="M13.500 3v3"/>`)}</div>
      <div class="c" style="width:28px">${ic(14, 12, network, "0 0 16 14")}</div>
      <div class="c" style="width:13px">${ic(14, 12, speaker, "0 0 16 14")}</div>
      <div class="clock" style="margin:0 13px 0 7px;width:54px">${t("2:52 PM", 38)}${t("11/21/2023", 54)}</div>
      <div class="c n" style="margin-right:18px">${ic(14, 14, noteIcon, "0 0 16 16")}<div class="badge">4</div></div>
      <div style="width:1px;background:#888;margin-right:4px"></div>`;
  }
}

/* ---------- teams ---------- */
const people: [string, string, number, string, string, boolean][] = [
  ["SJ", "Shravan Ja...", 65, "#d0ebdc", "#1d6340", true], ["SS", "Sabiha Shaik", 68, "#e5cdd0", "#591318", true],
  ["BS", "Bhavana Sa...", 69, "#d6e1e6", "#294852", true], ["NR", "Nandha Ra...", 68, "#cddaea", "#19315d", true],
  ["MS", "Maqdum Shariff", 86, "#d9f0f2", "#2f6467", false], ["GK", "Gowsic Kan...", 70, "#f2d3de", "#761d3c", true],
  ["SG", "Saathwik G...", 68, "#f7e9cf", "#7f5a17", true], ["", "View all", 41, "", "", false],
];
const rail: [string, number, unknown, number][] = [
  ["Activity", 33, ic(20, 20, svg`<path d="M10 1a6.500 6.500 0 0 0-6.500 6.500v4L1.500 15v1h17v-1l-2-3.500v-4A6.500 6.500 0 0 0 10 1zM7.500 16.500a2.500 2.500 0 0 0 5 0"/>`), 0],
  ["Chat", 21, ic(20, 20, chatBody), 0],
  ["Teams", 28, ic(20, 19, svg`<circle cx="11" cy="4" r="2.400"/><circle cx="4.200" cy="3.600" r="2"/><circle cx="17.800" cy="3.600" r="2"/><path d="M6.500 8.500h9v6a4.500 4.500 0 0 1-9 0zM4.500 8.500H1v4a4 4 0 0 0 4 4M17.500 8.500H21v4a4 4 0 0 1-4 4"/>`, "0 0 22 20"), 0],
  ["Calendar", 40, ic(19, 19, svg`<rect x="1" y="1" width="17" height="17" rx="2.500"/><path d="M1 5.500h17"/><g fill="currentColor" stroke="none"><circle cx="5.500" cy="10" r="1.100"/><circle cx="9.500" cy="10" r="1.100"/><circle cx="13.500" cy="10" r="1.100"/><circle cx="5.500" cy="13.800" r="1.100"/><circle cx="9.500" cy="13.800" r="1.100"/></g>`), 0],
  ["Calls", 21, ic(20, 20, svg`<path d="M5.500 1.200l1.800-.5q1.300-.3 1.900 1l1.100 2.600q.5 1.200-.5 2.100L8.200 8q.8 2.800 2.900 4.800l2-.7q1.200-.4 2 .7l1.600 2.200q.8 1.200-.2 2.200l-1.200 1.200q-1.300 1.200-3 .6Q8 17.500 5.500 12.500 2.500 7 3 3.500q.4-1.800 2.500-2.300z"/>`), 0],
  ["Files", 19, ic(14, 18, svg`<path d="M.8 2.500Q.8.700 2.500.700H8.500l4.700 4.700V15.500q0 1.800-1.700 1.800h-9Q.8 17.300.8 15.500zM8.500.8V5.500h4.600"/>`), -2],
  ["Viva Engage", 54, ic(20, 20, svg`<path d="M10 4.200Q8.800 1 5.500 1 1 1 1 5.500v9Q1 19 5.500 19q3.200 0 4.300-2.800Q11 13 8.200 11.700"/><path d="M10 4.200Q11.200 1 14.500 1 19 1 19 5.500v9q0 4.500-4.500 4.500-3.200 0-4.500-3"/><circle cx="10" cy="7.600" r="4.400"/><path d="M1 5.500q0 6 5.500 6h7q5.500 0 5.500-6"/>`), -2],
];
const actions: [string, number, unknown][] = [
  ["Chat", 23, ic(21, 21, chatBody, "0 0 20 20")],
  ["People", 33, html`<span class="row pc">${ic(18, 20, svg`<circle cx="9" cy="5" r="4.200"/><path d="M1 12.500q0-1 1-1h14q1 0 1 1 0 6.500-8 6.500t-8-6.500z"/>`)}${t("45", 14)}</span>`],
  ["Raise", 25, ic(18, 20, svg`<path d="M4 11V4.500q0-1.200 1.200-1.200t1.200 1.200V9V2.200Q6.400 1 7.600 1t1.200 1.200V9V2.700q0-1.200 1.200-1.200t1.200 1.200V9.500V5q0-1.200 1.200-1.200T13.600 5v6.500l2-1q1.700-.5 1.500 1-2.500 2.800-4 5T9 19q-5 0-5-5z"/>`)],
  ["React", 26, ic(20, 20, svg`<circle cx="10" cy="10" r="9"/><path d="M6 12.500q4 4 8 0"/><circle cx="7" cy="7.500" r="1.200" fill="currentColor" stroke="none"/><circle cx="13" cy="7.500" r="1.200" fill="currentColor" stroke="none"/>`)],
  ["View", 24, ic(19, 19, svg`<rect x="1" y="1" width="17" height="17" rx="3"/><path d="M12 1v17M12 6.700h6M12 12.300h6M1 9.500h11"/>`)],
  ["Notes", 29, ic(17, 20, svg`<path d="M1 4.500Q1 2.500 3 2.500h11q2 0 2 2V14l-5 5H3q-2 0-2-2zM11 19v-3q0-2 2-2h3M4.500.8v3M8.500.8v3M12.500.8v3M4.500 7.500h8M4.500 10.800h8M4.500 14h3.500"/>`)],
  ["Apps", 26, ic(20, 20, appsPlus, "0 0 19 19")],
  ["More", 27, ic(16, 4, dots3)],
];
const actions2: [string, number, unknown][] = [
  ["Camera", 38, ic(21, 20, svg`<g stroke="none" fill="#fff"><rect x="0" y="3" width="14" height="14" rx="2.500"/><path d="M15 8l5-4v12l-5-4z"/></g><path d="M0 0l20 20" stroke="#292929" stroke-width="3"/><path d="M1 0l19 19.500" stroke-width="1.300"/>`)],
  ["Mic", 18, ic(20, 20, svg`<rect x="7" y="1" width="6" height="11" rx="3" fill="#fff" stroke="none"/><path d="M4.500 9q0 6 5.500 6t5.500-6M10 15v4"/><path d="M0 0l20 20" stroke="#292929" stroke-width="3"/><path d="M1 0l18.500 19" stroke-width="1.300"/>`)],
  ["Share", 28, ic(20, 17, svg`<rect width="20" height="17" rx="2.500" fill="#fff" stroke="none"/><path d="M10 13.500V4M6.500 7.500L10 4l3.500 3.500" stroke="#222" stroke-width="1.400"/>`)],
];

@customElement("teams-shell")
class TeamsShell extends LitElement {
  static styles = [base, css`
    :host { background: #f4f4f4; padding: 0 4px 4px; height: 790px; color: #d6d6d6; }
    .app { height: 786px; background: #0a0a0a; border-radius: 8px; overflow: hidden; }
    .head { height: 48px; display: flex; align-items: center; border-bottom: 1px solid #1c1c1c; }
    .search { width: 466px; height: 32px; border-radius: 4px; background: #242424; margin-left: 391px; display: flex; align-items: center; padding-left: 19px; font-size: 13.200px; color: #adadad; }
    .ava { position: relative; width: 28px; height: 28px; border-radius: 50%; background: #d6d3e8; color: #463a72; font-size: 11.500px; font-weight: 600; margin: 0 11px 0 20px; }
    .dot { position: absolute; right: -1px; bottom: -1px; width: 12px; height: 12px; border-radius: 50%; background: #d13438; border: 1px solid #0a0a0a; }
    .main { display: flex; height: 738px; }
    .rail { width: 68px; flex: none; padding-top: 6px; color: #b4b4b4; font-size: 9.400px; }
    .ri { height: 56px; display: flex; flex-direction: column; align-items: center; }
    .ri .rc { height: 28px; } .rl { line-height: 16px; }
    .rail .i { stroke-width: 1.300; }
    .meet { flex: 1; display: flex; flex-direction: column; background: #1f1f1f; }
    .mb { height: 60px; background: #292929; display: flex; align-items: center; padding: 0 20px 0 20px; font-size: 13.200px; border-bottom: 1px solid #222; }
    .a { width: 56px; height: 60px; display: flex; flex-direction: column; align-items: center; font-size: 11.200px; padding-top: 11px; }
    .a .ai { height: 24px; } .a .al { line-height: 16px; margin-top: 1px; }
    .a .i { stroke-width: 1.200; }
    .pc { gap: 4px; font-size: 12px; font-weight: 600; }
    .bright { color: #fff; }
    .leave { width: 92px; height: 32px; border-radius: 4px; background: #d13440; color: #fff; font-weight: 600; font-size: 13px; gap: 8px; margin-left: 10px; padding-left: 2px; }
    .body { flex: 1; display: flex; padding: 27px 5px 5px; position: relative; }
    .share { width: 1109px; height: 624px; flex: none; }
    .side { width: 241px; margin-left: 4px; display: flex; flex-direction: column; justify-content: space-between; }
    .grid { display: grid; grid-template-columns: 110px 110px; grid-auto-rows: 110px; padding: 30px 0 0 11px; }
    .p { display: flex; flex-direction: column; align-items: center; }
    .pa { width: 70px; height: 70px; border-radius: 50%; font-size: 26.500px; font-weight: 600; padding-bottom: 1px; }
    .va { border: 1px solid #5c5c5c; background: #292929; color: #fff; }
    .pn { height: 30px; gap: 13px; font-size: 11.200px; color: #f0f0f0; font-weight: 500; }
    .pn.m { padding-right: 2px; }
    .self { height: 133px; background: #333; }
    .sa { width: 56px; height: 56px; border-radius: 50%; background: #d6d3e8; color: #322a5e; font-size: 21px; font-weight: 600; }
    .toast { position: absolute; left: 522px; top: 8px; width: 320px; height: 110px; border-radius: 8px; background: #242424; border: 1px solid #3b3b3b; padding: 13px 12px 0; box-shadow: 0 4px 10px rgba(0,0,0,.3); color: #adadad; font-size: 13.200px; line-height: 20px; display: flex; flex-direction: column; }
    .tt { color: #fff; font-size: 11.400px; font-weight: 600; height: 20px; margin-bottom: 7px; }
    .lk { text-decoration: underline; text-decoration-color: #7f85f5; text-underline-offset: 2px; align-self: flex-start; }
    .tx { position: absolute; right: 14px; top: 16px; }
    .tag, .zm { position: absolute; top: 641px; height: 24px; border-radius: 4px; background: rgba(20,20,20,.68); color: #fff; font-size: 11.200px; font-weight: 600; }
    .tag { left: 13px; width: 97px; } .zm { left: 118px; width: 66px; gap: 20px; }
  `];
  action([l, w, icon]: [string, number, unknown], cls = "") {
    return html`<div class="a ${cls}"><div class="c ai">${icon}</div><div class="al">${t(l, w)}</div></div>`;
  }
  render() {
    return html`<div class="app">
      <div class="head">
        <div class="c" style="width:68px">${ic(15, 15, svg`<g fill="#fff" stroke="none">${[0, 6, 12].map((x) => [0, 6, 12].map((y) => svg`<rect x=${x} y=${y} width="2.500" height="2.500" rx=".8"/>`))}</g>`)}</div>
        <div style="width:24px;padding-left:2px">${ic(21, 19, teamsLogo, "0 0 21 18")}</div>
        <div class="search">${ic(14, 14, svg`<circle cx="5.500" cy="5.500" r="5"/><path d="M9 9l5 5"/>`)}<span style="width:18px"></span>${t("Search", 41)}</div>
        <div class="grow"></div>
        ${ic(13, 4, svg`<g fill="#bbb" stroke="none"><circle cx="1.500" cy="2" r="1.100"/><circle cx="6.500" cy="2" r="1.100"/><circle cx="11.500" cy="2" r="1.100"/></g>`)}
        <div class="c ava">${t("RR", 14.5)}<div class="dot"></div></div>
      </div>
      <div class="main">
        <div class="rail">
          ${rail.map(([l, w, icon, dy]) => html`<div class="ri"><div class="c rc">${icon}</div><div class="rl" style=${styleMap({ marginTop: dy + "px" })}>${t(l, w)}</div></div>`)}
          <div class="ri" style="height:42px"><div class="c rc" style="height:42px">${ic(16, 4, dots3)}</div></div>
          <div class="ri" style="padding-top:14px"><div class="c rc">${ic(19, 19, appsPlus)}</div><div class="rl">${t("Apps", 22)}</div></div>
        </div>
        <div class="meet">
          <div class="mb">
            ${ic(16, 18, svg`<path stroke-width="1.200" d="M8 1Q11 3.500 15 3.500V9q0 5.500-7 8Q1 14.500 1 9V3.500Q5 3.500 8 1z"/>`)}
            <span style="width:16px"></span>${ic(16, 16, svg`<circle cx="8" cy="8" r="7.200" stroke-width="1.500"/><circle cx="8" cy="8" r="5" fill="#c4314b" stroke="none"/>`)}
            <span style="width:12px"></span>${t("43:27", 34)}
            <div class="grow"></div>
            ${actions.map((a) => this.action(a))}
            <div style="width:1px;height:32px;background:#4a4a4a;margin:0 8px"></div>
            ${actions2.map((a) => this.action(a, "bright"))}
            <div class="c leave">${ic(19, 9, svg`<path fill="#fff" stroke="none" d="M0 6Q0 0 9.500 0T19 6q0 2.500-1.500 2.500L14 7.800q-1-.3-1-1.500l-.3-2q-3.200-1-6.400 0L6 6.300q0 1.200-1 1.500l-3.500.7Q0 8.500 0 6z"/>`)}${t("Leave", 37)}</div>
          </div>
          <div class="body">
            <div class="share"><paint-window></paint-window><shared-taskbar></shared-taskbar></div>
            <div class="side">
              <div class="grid">${people.map(([i, n, w, bg, fg, m]) => html`<div class="p">
                ${i ? html`<div class="c pa" style=${styleMap({ background: bg, color: fg })}>${i}</div>` : html`<div class="c pa va">${ic(20, 4, svg`<g fill="#fff" stroke="none"><circle cx="2" cy="2" r="2"/><circle cx="10" cy="2" r="2"/><circle cx="18" cy="2" r="2"/></g>`)}</div>`}
                <div class="c pn ${m ? "m" : ""}">${t(n, w)}${m ? ic(12, 13, micOff, "0 0 13 13") : nothing}</div></div>`)}</div>
              <div class="c self"><div class="c sa">${t("RR", 28)}</div></div>
            </div>
            <div class="toast"><div class="tt">${t("Recording has started.", 118)}</div>${t("Started by Subhiksha Suresh. By attending this", 286)}${t("meeting, you consent to being recorded.", 251)}${t("Privacy policy", 84, "lk")}
              <div class="tx">${ic(12, 12, svg`<path d="M0 0l12 12M12 0L0 12"/>`)}</div></div>
            <div class="c tag">${t("Maqdum Shariff", 85)}</div>
            <div class="c zm">${ic(12, 12, svg`<path d="M0 6h12" stroke="#aaa"/>`)}${ic(12, 12, svg`<path d="M0 6h12M6 0v12"/>`)}</div>
          </div>
        </div>
      </div>
    </div>`;
  }
}

/* ---------- desktop taskbar ---------- */
@customElement("desk-taskbar")
class DeskTaskbar extends LitElement {
  static styles = [base, css`
    :host { height: 40px; display: flex; background: #1c1c1c; color: #f4f4f4; font-size: 13.800px; }
    .c { height: 40px; }
    .search { width: 288px; height: 40px; background: #f2f2f2; border: 1px solid #bdbdbd; color: #3a3a3a; display: flex; align-items: center; font-size: 14px; padding: 0 3px 0 11px; }
    .deal { height: 32px; width: 72px; border-radius: 5px; background: #0046b8; color: #fff; font-size: 9.500px; font-weight: 800; justify-content: flex-start; padding-left: 5px; gap: 1px; }
    .app { width: 49px; border-bottom: 3px solid transparent; }
    .on { background: #484848; border-bottom-color: #76b9ed; width: 48px; margin: 0 0 0 3px; }
    .un { background: linear-gradient(#76b9ed, #76b9ed) 50% 100% / 40px 2px no-repeat; background-origin: border-box; background-clip: border-box; }
    .clock { width: 58px; text-align: center; font-size: 11.300px; line-height: 18px; padding-top: 2px; }
    .n { position: relative; }
    .badge { position: absolute; left: 7px; top: 19px; width: 17px; height: 17px; border-radius: 50%; background: #383838; border: 1px solid #8a8a8a; font-size: 10.500px; line-height: 15px; text-align: center; }
  `];
  render() {
    return html`
      <div class="c" style="width:48px">${ic(16, 16, winLogo)}</div>
      <div class="search">${ic(17, 17, magnify, "0 0 16 16")}<span style="width:11px"></span>${t("Type here to search", 128)}<div class="grow"></div>
        <div class="c deal">${ic(9, 9, svg`<path d="M4.500 0v3M4.500 6v3M0 2.500l3 1M6 5.500l3 1M0 6.500l3-1M6 3.500l3-1" stroke="#f5c518" stroke-width="1.300"/>`)}${t("THIS", 20)}</div></div>
      <div class="c" style="width:48px">${ic(17, 16, taskView)}</div>
      <div class="c app on">${ic(24, 24, svg`${edge}<rect x="0" y="15" width="12" height="9" rx="1" fill="#d98a14" stroke="none"/><path d="M4 15v-1.500h4V15M0 19h12" stroke="#7a4a08"/>`)}</div>
      <div class="c app">${ic(22, 18, folder)}</div>
      <div class="c app">${ic(23, 24, store, "0 0 22 22")}</div>
      <div class="c app un">${ic(24, 22, mail)}</div>
      <div class="c app">${ic(24, 23, svg`<g stroke="none"><path fill="#1c86d8" d="M2 8L13 0l11 7v13H2z"/><path fill="#35c1f1" d="M13 0l11 7-9 6z"/><path fill="#0a4fa0" d="M14 13l10-6v9z"/><rect x="0" y="3" width="14" height="15" rx="1.500" fill="#0f5fb8"/><ellipse cx="7" cy="10.500" rx="3.200" ry="3.800" stroke="#fff" stroke-width="2"/><rect x="7" y="16" width="17" height="7" fill="#2be0d8"/></g><text x="15.500" y="22" text-anchor="middle" font-size="6.500" font-weight="800" fill="#0a2a40" stroke="none">NEW</text>`)}</div>
      <div class="grow"></div>
      <div class="c" style="width:26px">${ic(25, 23, svg`<g stroke="none"><circle cx="13" cy="12" r="10" fill="#f29a2e"/><path fill="#b8d0f5" d="M3 9.500a3.500 3.500 0 0 1 .5-6.500A4.500 4.500 0 0 1 12 3.500a3 3 0 0 1 0 6z"/><path fill="#a9c6f2" d="M14 22a3.500 3.500 0 0 1 .5-6.500 4 4 0 0 1 7.500.5 3 3 0 0 1 0 6z"/></g>`)}</div>
      <div class="c" style="margin-left:7px">${t("28°C", 29)}</div><div class="c" style="margin:0 24px 0 9px">${t("Partly sunny", 75)}</div>
      <div class="c" style="width:12px">${ic(12, 7, chevUp)}</div>
      <div class="c" style="width:34px">${ic(11, 17, taskMic, "0 0 10 16")}</div>
      <div class="c" style="width:16px">${ic(16, 14, network)}</div>
      <div class="c" style="width:32px">${ic(16, 14, speaker)}</div>
      <div class="clock" style="margin:0 15px 0 -1px">${t("2:52 PM", 42)}${t("11/21/2023", 58)}</div>
      <div class="c n">${ic(16, 16, noteIcon)}<div class="badge">1</div></div>
      <div style="width:1px;background:#777;margin:0 4px 0 20px"></div>`;
  }
}

@customElement("app-root")
class AppRoot extends LitElement {
  static styles = css`
    :host { display: flex; flex-direction: column; width: 1440px; height: 900px; overflow: hidden; background: #f7f7f7; }
  `;
  render() {
    return html`<browser-chrome></browser-chrome><teams-shell></teams-shell><desk-taskbar></desk-taskbar>`;
  }
}
